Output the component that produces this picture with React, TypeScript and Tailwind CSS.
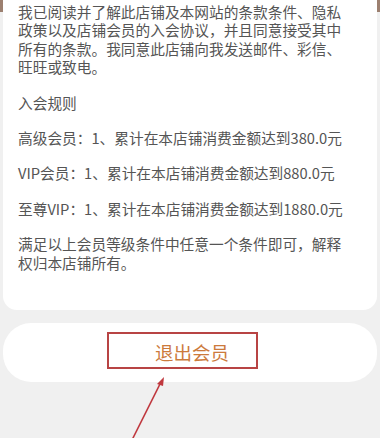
export default function App() {
  const paras = [
    '我已阅读并了解此店铺及本网站的条款条件、隐私政策以及店铺会员的入会协议，并且同意接受其中所有的条款。我同意此店铺向我发送邮件、彩信、旺旺或致电。',
    '入会规则',
    '高级会员：1、累计在本店铺消费金额达到380.0元',
    'VIP会员：1、累计在本店铺消费金额达到880.0元',
    '至尊VIP：1、累计在本店铺消费金额达到1880.0元',
    '满足以上会员等级条件中任意一个条件即可，解释权归本店铺所有。',
  ]

  return (
    <div
      className="relative w-[380px] h-[438px] overflow-hidden bg-[#f0f0f0]"
      style={{ fontFamily: '"Noto Sans CJK SC", "Noto Sans", sans-serif' }}
    >
      <div className="h-[12px] bg-[#9c8070]" />

      {/* terms card */}
      <div className="-mt-[12px] mx-[3px] bg-white rounded-b-[14px] pl-[15px] pr-[22px] pt-[3px] pb-[38px]">
        <div className="flex flex-col gap-[17px] text-[14.7px] leading-[18.4px] text-[#555]">
          {paras.map(p => (
            <p key={p}>{p}</p>
          ))}
        </div>
      </div>

      {/* quit button */}
      <div className="mt-[13px] mx-[3px] h-[59px] bg-white rounded-[28px] flex items-center justify-center">
        <span className="text-[18.5px] text-[#cc7a3c] pl-[4px]">退出会员</span>
      </div>

      {/* annotation */}
      <div className="absolute left-[107px] top-[332px] w-[151px] h-[37px] border-2 border-[#b84444]" />
      <svg className="absolute left-0 top-0" width="380" height="438">
        <line x1="132" y1="440" x2="161" y2="382" stroke="#c0393f" strokeWidth="1.6" />
        <polygon points="164,377 157,384 163,386" fill="#c0393f" />
      </svg>
    </div>
  )
}
